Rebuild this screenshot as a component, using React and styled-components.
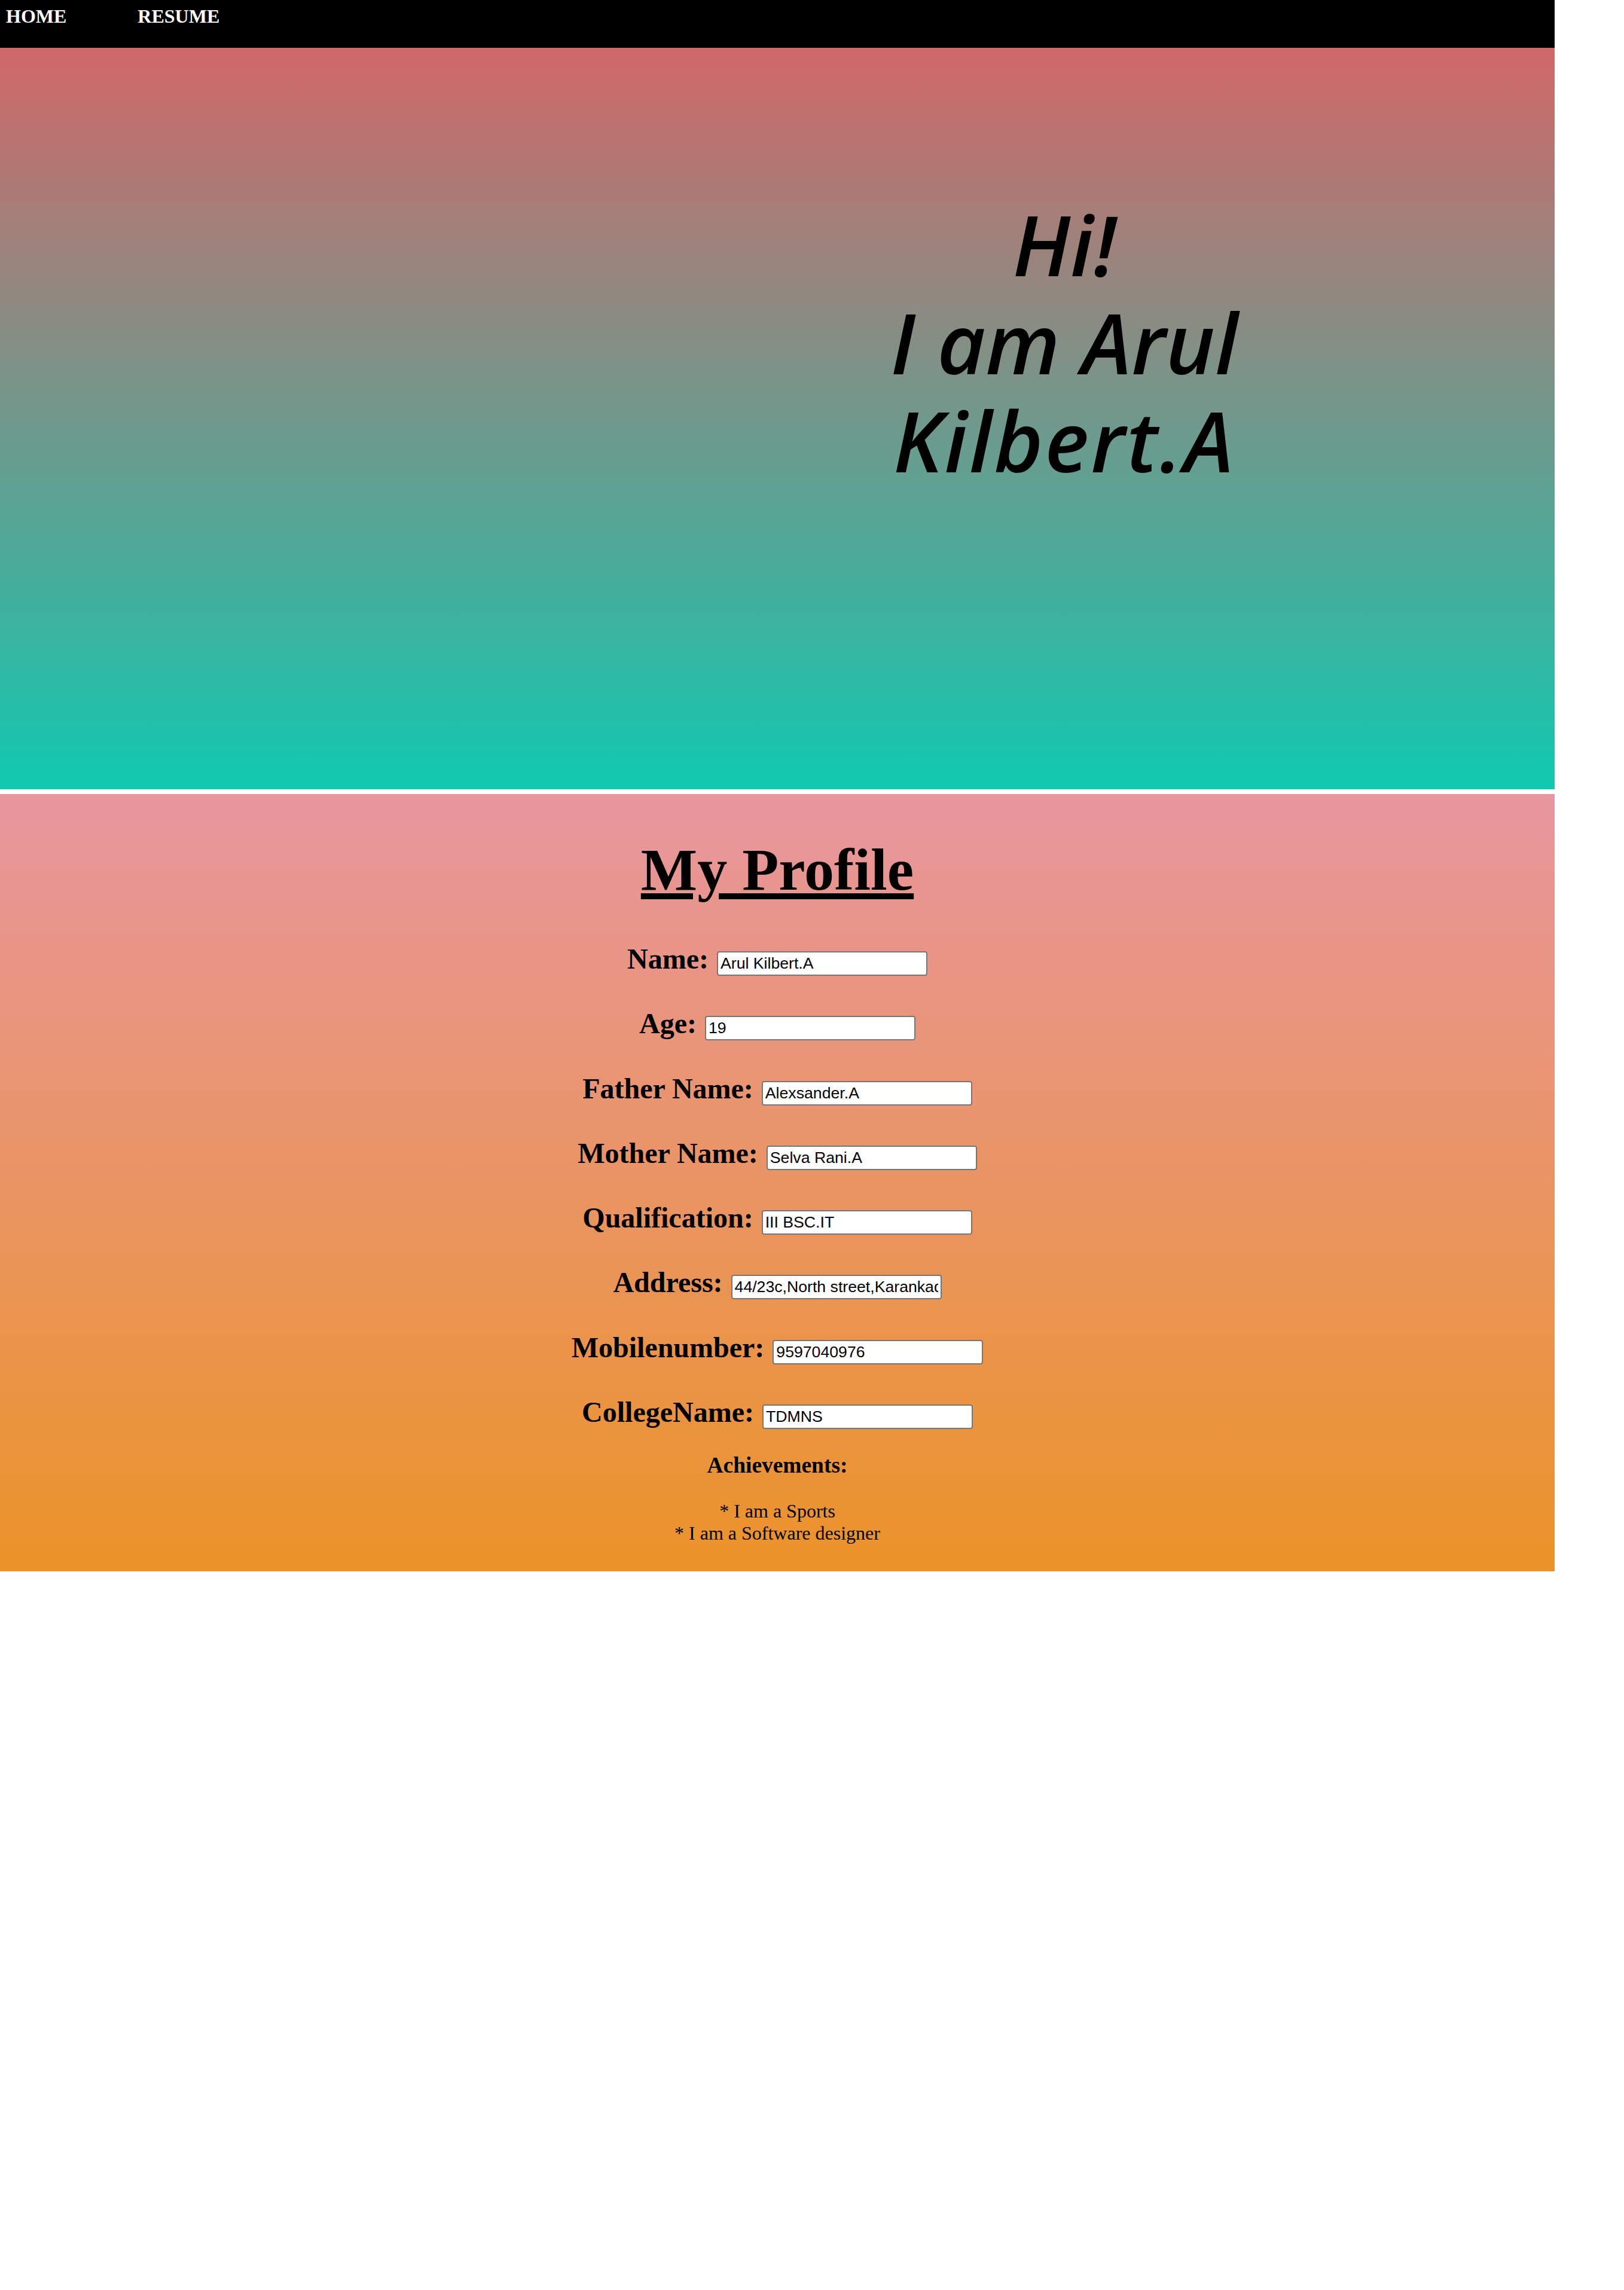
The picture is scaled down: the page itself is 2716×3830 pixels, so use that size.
import React from 'react';
import styled, { createGlobalStyle } from 'styled-components';

const GlobalStyle = createGlobalStyle`
  html, body {
    margin: 0;
    padding: 0;
    background: #ffffff;
  }
  body {
    font-family: "Liberation Serif", "Times New Roman", serif;
    font-size: 32px;
    color: #000;
  }
`;

const Page = styled.div`
  width: 2600px;
`;

const NavBar = styled.nav`
  display: flex;
  align-items: flex-start;
  gap: 119px;
  height: 80px;
  box-sizing: border-box;
  padding: 9px 0 0 10px;
  background: #000;
`;

const NavLink = styled.a`
  color: #fff;
  font-size: 32px;
  font-weight: bold;
  line-height: normal;
  text-decoration: none;
`;

const Hero = styled.section`
  height: 1240px;
  box-sizing: border-box;
  padding-top: 246px;
  margin-bottom: 8px;
  background: linear-gradient(#d16868, #10c9b0);
`;

const Greeting = styled.h1`
  margin: 0 0 0 960px;
  text-align: center;
  font-family: "Open Sans", "Noto Sans", sans-serif;
  font-style: italic;
  font-weight: 600;
  font-size: 140px;
  line-height: 164px;
`;

const GreetingLine = styled.span`
  display: block;
  height: 164px;
  letter-spacing: ${p => p.$spread || 0}px;
`;

const Profile = styled.section`
  height: 1300px;
  box-sizing: border-box;
  padding-top: 69px;
  text-align: center;
  background: linear-gradient(#e8969f, #eb9328);
`;

const Title = styled.h1`
  margin: 0;
  font-size: 100px;
  font-weight: bold;
  line-height: normal;
  text-decoration: underline;
  text-decoration-thickness: 10px;
  text-underline-offset: 6px;
`;

const Fields = styled.div`
  display: flex;
  flex-direction: column;
  gap: 52.3px;
  margin-top: 64px;
`;

const Row = styled.div`
  display: flex;
  justify-content: center;
  align-items: baseline;
  gap: 14px;
  line-height: normal;
`;

const Label = styled.label`
  font-size: 48px;
  font-weight: bold;
`;

const Field = styled.input`
  width: 352px;
  height: 41px;
  box-sizing: border-box;
  padding: 0 4px;
  border: 2px solid #767676;
  border-radius: 4px;
  background: #fff;
  color: #000;
  font-family: "Liberation Sans", Arial, sans-serif;
  font-size: 26.67px;
  outline: none;
`;

const AchTitle = styled.h3`
  margin: 39px 0 0;
  font-size: 37.44px;
  font-weight: bold;
  line-height: normal;
`;

const AchList = styled.p`
  margin: 37px 0 0;
  font-size: 32px;
  line-height: normal;
`;

const fields = [
  ['Name:', 'Arul Kilbert.A'],
  ['Age:', '19'],
  ['Father Name:', 'Alexsander.A'],
  ['Mother Name:', 'Selva Rani.A'],
  ['Qualification:', 'III BSC.IT'],
  ['Address:', '44/23c,North street,Karankadu,Ramanathapuram'],
  ['Mobilenumber:', '9597040976'],
  ['CollegeName:', 'TDMNS'],
];

export default function App() {
  return (
    <Page>
      <GlobalStyle />
      <NavBar>
        <NavLink href="#home">HOME</NavLink>
        <NavLink href="#resume">RESUME</NavLink>
      </NavBar>

      <Hero>
        <Greeting>
          <GreetingLine>Hi!</GreetingLine>
          <GreetingLine>I am Arul</GreetingLine>
          <GreetingLine $spread={3}>Kilbert.A</GreetingLine>
        </Greeting>
      </Hero>

      <Profile>
        <Title>My Profile</Title>
        <Fields>
          {fields.map(([label, value]) => (
            <Row key={label}>
              <Label>{label}</Label>
              <Field type="text" defaultValue={value} />
            </Row>
          ))}
        </Fields>
        <AchTitle>Achievements:</AchTitle>
        <AchList>
          * I am a Sports
          <br />
          * I am a Software designer
        </AchList>
      </Profile>
    </Page>
  );
}
